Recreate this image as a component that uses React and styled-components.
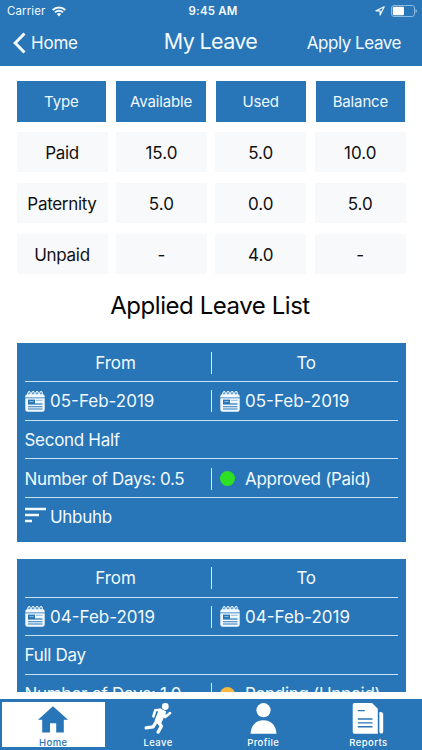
import styled, { createGlobalStyle } from "styled-components";

const BLUE = "#2875b7";

const GlobalStyle = createGlobalStyle`
  * {
    box-sizing: border-box;
  }
  body {
    margin: 0;
    overflow: hidden;
    background-color: #ffffff;
    font-family: Inter, "Liberation Sans", sans-serif;
  }
`;
const Screen = styled.div`
  display: flex;
  flex-direction: column;
  width: 422px;
  height: 750px;
  overflow: hidden;
`;
const Header = styled.header`
  flex: none;
  height: 65.5px;
  background-color: ${BLUE};
  color: #f2faff;
`;
const StatusBar = styled.div`
  display: grid;
  grid-template-columns: 1fr auto 1fr;
  align-items: center;
  height: 22px;
  padding: 0 5px 0 7px;
  font-size: 11.5px;
`;
const StatusGroup = styled.div`
  display: flex;
  align-items: center;
  justify-content: ${({ $end }) => ($end ? "flex-end" : "flex-start")};
  gap: 6px;
  letter-spacing: 0.12px;
`;
const Clock = styled.span`
  padding-left: 2px;
  font-weight: 600;
  letter-spacing: 0.15px;
`;
const NavBar = styled.div`
  display: grid;
  grid-template-columns: 1fr auto 1fr;
  align-items: center;
  height: 42.5px;
  padding: 0 21px 0 13px;
`;
const BackButton = styled.div`
  display: flex;
  align-items: center;
  gap: 5px;
  font-size: 17px;
  letter-spacing: -0.2px;
`;
const NavTitle = styled.h1`
  margin: 0 0 4px;
  padding-left: 7px;
  font-size: 21.5px;
  line-height: 26px;
  font-weight: 400;
  letter-spacing: -0.65px;
`;
const ApplyButton = styled.div`
  text-align: right;
  font-size: 17px;
  letter-spacing: -0.45px;
`;
const Content = styled.main`
  flex: none;
  height: 626.2px;
  overflow: hidden;
  padding: 15.5px 16.5px 0;
`;
const HeadRow = styled.div`
  display: grid;
  grid-template-columns: repeat(4, 89.7px);
  column-gap: 10px;
  margin-bottom: 10.8px;
`;
const HeadCell = styled.div`
  display: flex;
  align-items: center;
  justify-content: center;
  height: 40.7px;
  padding-top: 1px;
  background-color: ${BLUE};
  color: #eef8ff;
  font-size: 15px;
  letter-spacing: -0.15px;
`;
const BodyRow = styled.div`
  display: grid;
  grid-template-columns: repeat(4, 91px);
  column-gap: 8.4px;
  margin-bottom: 11px;
`;
const BodyCell = styled.div`
  display: flex;
  align-items: center;
  justify-content: center;
  height: 40px;
  padding-top: 1px;
  background-color: #f8f9fb;
  color: #111111;
  font-size: 17px;
  letter-spacing: ${({ $number }) => ($number ? "0" : "-0.3px")};
`;
const ListTitle = styled.h2`
  margin: 17px 0 22px;
  padding-right: 2px;
  text-align: center;
  font-size: 24px;
  line-height: 30px;
  font-weight: 400;
  letter-spacing: -0.45px;
  color: #050505;
`;
const Card = styled.section`
  width: 389px;
  height: 199px;
  margin-bottom: 16.6px;
  padding: 0 8px;
  background-color: ${BLUE};
  color: #f2faff;
  font-size: 17px;
`;
const CardRow = styled.div`
  display: flex;
  align-items: center;
  height: 38.65px;
  padding-top: ${({ $last }) => ($last ? "0" : "0.6px")};
  border-bottom: ${({ $last }) => ($last ? "0" : "1px")} solid #c5e2f6;
`;
const Half = styled.div`
  display: flex;
  align-items: center;
  justify-content: ${({ $center }) => ($center ? "center" : "flex-start")};
  width: ${({ $right }) => ($right ? "187px" : "186px")};
  height: 22px;
  padding-left: ${({ $right, $center }) =>
    $right ? ($center ? "3px" : "8px") : "0"};
  padding-right: ${({ $center, $right }) => ($center && !$right ? "4px" : "0")};
  border-left: ${({ $right }) => ($right ? "1px solid #d5ecfb" : "0")};
`;
const Label = styled.span`
  letter-spacing: ${({ $spacing = -0.3 }) => $spacing}px;
  white-space: nowrap;
`;
const IconSlot = styled.span`
  display: flex;
  align-items: center;
  flex: none;
  width: ${({ $width }) => $width}px;
  padding-bottom: ${({ $raise = 0 }) => $raise}px;
`;
const Dot = styled.span`
  width: 15px;
  height: 15px;
  border-radius: 50%;
  background-color: ${({ $color }) => $color};
`;
const TabBar = styled.nav`
  display: grid;
  grid-template-columns: 102.5px 1fr 1fr 1fr;
  column-gap: 2px;
  flex: none;
  height: 50.5px;
  margin-top: 7.8px;
  padding: 3px 2px 2.5px;
  background-color: ${BLUE};
`;
const Tab = styled.div`
  display: flex;
  flex-direction: column;
  align-items: center;
  justify-content: space-between;
  padding-top: ${({ $active }) => ($active ? "4px" : "1px")};
  background-color: ${({ $active }) => ($active ? "#ffffff" : BLUE)};
  color: ${({ $active }) => ($active ? BLUE : "#ffffff")};
  font-size: 9.5px;
  line-height: 9px;
  font-weight: 500;
  letter-spacing: 0.4px;
`;

const WifiIcon = () => (
  <svg width="14" height="11" viewBox="0 0 14 11" fill="none" stroke="currentColor">
    <path d="M.8 4.1a8.8 8.8 0 0 1 12.4 0" strokeWidth="2.1" />
    <path d="M3 6.4a5.7 5.7 0 0 1 8 0" strokeWidth="1.8" />
    <path d="M7 10.4 4.8 8.1a3.1 3.1 0 0 1 4.4 0z" fill="currentColor" stroke="none" />
  </svg>
);

const LocationIcon = () => (
  <svg width="10" height="10" viewBox="0 0 10 10" fill="none" stroke="currentColor">
    <path d="M9.2.8.9 4.8h4.2v4.3z" strokeWidth="1.2" strokeLinejoin="round" />
  </svg>
);

const BatteryIcon = () => (
  <svg width="26" height="12" viewBox="0 0 26 12">
    <rect x=".5" y=".5" width="23" height="11" rx="2.5" fill="none" stroke="#8db9de" />
    <rect x="1.8" y="1.8" width="11.2" height="8.4" rx="1" fill="#ffffff" />
    <path d="M24.5 4v4q1.5-.7 1.5-2t-1.5-2" fill="#8db9de" />
  </svg>
);

const BackIcon = () => (
  <svg width="13" height="22" viewBox="0 0 13 22" fill="none">
    <path d="M11.5 1.5 2.2 11l9.3 9.5" stroke="currentColor" strokeWidth="3" />
  </svg>
);

const CalendarIcon = () => (
  <svg width="20" height="22" viewBox="0 0 20 22">
    <path
      d="M2.8 5.5V3.2Q4 .2 5.2 2.4V5M6.7 5V3Q8 .2 9.2 2.4V5M10.7 5V3Q12 .2 13.2 2.4V5M14.7 5V3Q16 .2 17.2 2.4V5"
      fill="none"
      stroke="#f2faff"
      strokeWidth="1.1"
    />
    <path
      d="M2.3 4.2h15.4a2 2 0 0 1 2 2v1H.3v-1a2 2 0 0 1 2-2zM.3 8.2h19.4v11.2a2.4 2.4 0 0 1-2.4 2.4H2.7a2.4 2.4 0 0 1-2.4-2.4z"
      fill="#f2faff"
    />
    <path d="M.3 7.2h19.4v1H.3z" fill="#8fbce0" />
    <path d="M3 9.6h7v5H3z" fill={BLUE} />
    <path d="M4.4 11.2h4.2v.9H4.4z" fill="#9bc4e5" />
    <path d="M10 14h7.5" stroke={BLUE} strokeWidth="1.2" />
    <path d="M10.8 10.3h6.7" stroke="#8fbce0" strokeWidth="1" />
    <path d="M3 16.7h14.5M3 19h14.5" stroke={BLUE} strokeWidth="1.1" />
  </svg>
);

const NotesIcon = () => (
  <svg width="21" height="16" viewBox="0 0 21 16" fill="#f2faff">
    <path d="M0 .8h21v2.4H0zM0 6.8h14v2.4H0zM0 12.8h7v2.4H0z" />
  </svg>
);

const HomeIcon = () => (
  <svg width="32" height="27" viewBox="0 0 32 27" fill="currentColor">
    <path d="M16 .3 31 13.8h-4.2v12.6h-7.6v-9.2h-6.2v9.2H5.2V13.8H1z" />
  </svg>
);

const RunnerIcon = () => (
  <svg width="28" height="31" viewBox="0 0 28 31" fill="none" stroke="currentColor">
    <circle cx="21.3" cy="3.5" r="3.4" fill="currentColor" stroke="none" />
    <path d="M16 6.8 11.8 17.5l4.2 3 5-11.5z" fill="currentColor" strokeWidth="2.2" strokeLinejoin="round" />
    <g strokeWidth="2.6" strokeLinecap="round" strokeLinejoin="round">
      <path d="M16.5 6.8 11.2 7.3 9.4 13.3" />
      <path d="m19.5 9.5 1.8 4.6 4.8-4" />
      <path d="m12.5 18.3-3.4 5.6-7 1" strokeWidth="3.2" />
      <path d="m14.6 19.5 2.8 3.7-3.2 5.8" strokeWidth="3.4" />
    </g>
  </svg>
);

const ProfileIcon = () => (
  <svg width="27" height="31" viewBox="0 0 27 31" fill="currentColor">
    <circle cx="13.5" cy="7.2" r="7.1" />
    <path d="M.5 30.7C1 22.7 5.5 17.3 13.5 17.3s12.5 5.4 13 13.4z" />
  </svg>
);

const ReportIcon = () => (
  <svg width="32" height="31" viewBox="0 0 32 31" fill="currentColor">
    <path d="M2.5 0H20l5.8 5.8v24.9H2.5A1.8 1.8 0 0 1 .7 28.9V1.8A1.8 1.8 0 0 1 2.5 0z" />
    <path d="M27.4 9h1.2a2.6 2.6 0 0 1 2.6 2.6v17.1a1.9 1.9 0 0 1-3.8 0z" />
    <path d="M5.8 7.6h7M5.8 16h14.7M5.8 19.9h14.7M5.8 23.8h14.7" stroke={BLUE} strokeWidth="1.4" />
  </svg>
);

const balances = [
  ["Paid", "15.0", "5.0", "10.0"],
  ["Paternity", "5.0", "0.0", "5.0"],
  ["Unpaid", "-", "4.0", "-"],
];

const leaves = [
  {
    date: "05-Feb-2019",
    period: "Second Half",
    days: "0.5",
    status: "Approved (Paid)",
    color: "#2ee024",
    note: "Uhbuhb",
  },
  {
    date: "04-Feb-2019",
    period: "Full Day",
    days: "1.0",
    status: "Pending (Unpaid)",
    color: "#f9b93c",
    note: "",
  },
];

const LeaveDate = ({ date }) => (
  <>
    <IconSlot $width={25.5} $raise={1}>
      <CalendarIcon />
    </IconSlot>
    <Label $spacing={0}>{date}</Label>
  </>
);

const LeaveCard = ({ leave }) => {
  return (
    <Card>
      <CardRow>
        <Half $center>
          <Label $spacing={-0.1}>From</Label>
        </Half>
        <Half $right $center>
          <Label $spacing={-0.3}>To</Label>
        </Half>
      </CardRow>
      <CardRow>
        <Half>
          <LeaveDate date={leave.date} />
        </Half>
        <Half $right>
          <LeaveDate date={leave.date} />
        </Half>
      </CardRow>
      <CardRow>
        <Label>{leave.period}</Label>
      </CardRow>
      <CardRow>
        <Half>
          <Label>Number of Days: {leave.days}</Label>
        </Half>
        <Half $right>
          <IconSlot $width={25.5}>
            <Dot $color={leave.color} />
          </IconSlot>
          <Label>{leave.status}</Label>
        </Half>
      </CardRow>
      <CardRow $last>
        <IconSlot $width={25.5} $raise={5}>
          <NotesIcon />
        </IconSlot>
        <Label>{leave.note}</Label>
      </CardRow>
    </Card>
  );
};

const App = () => {
  return (
    <Screen>
      <GlobalStyle />
      <Header>
        <StatusBar>
          <StatusGroup>
            Carrier <WifiIcon />
          </StatusGroup>
          <Clock>9:45 AM</Clock>
          <StatusGroup $end>
            <LocationIcon />
            <BatteryIcon />
          </StatusGroup>
        </StatusBar>
        <NavBar>
          <BackButton>
            <BackIcon />
            Home
          </BackButton>
          <NavTitle>My Leave</NavTitle>
          <ApplyButton>Apply Leave</ApplyButton>
        </NavBar>
      </Header>
      <Content>
        <HeadRow>
          {["Type", "Available", "Used", "Balance"].map((name) => (
            <HeadCell key={name}>{name}</HeadCell>
          ))}
        </HeadRow>
        {balances.map((row) => (
          <BodyRow key={row[0]}>
            {row.map((value, i) => (
              <BodyCell key={i} $number={i > 0}>
                {value}
              </BodyCell>
            ))}
          </BodyRow>
        ))}
        <ListTitle>Applied Leave List</ListTitle>
        {leaves.map((leave) => (
          <LeaveCard key={leave.date} leave={leave} />
        ))}
      </Content>
      <TabBar>
        <Tab $active>
          <HomeIcon />
          Home
        </Tab>
        <Tab>
          <RunnerIcon />
          Leave
        </Tab>
        <Tab>
          <ProfileIcon />
          Profile
        </Tab>
        <Tab>
          <ReportIcon />
          Reports
        </Tab>
      </TabBar>
    </Screen>
  );
};

export default App;
